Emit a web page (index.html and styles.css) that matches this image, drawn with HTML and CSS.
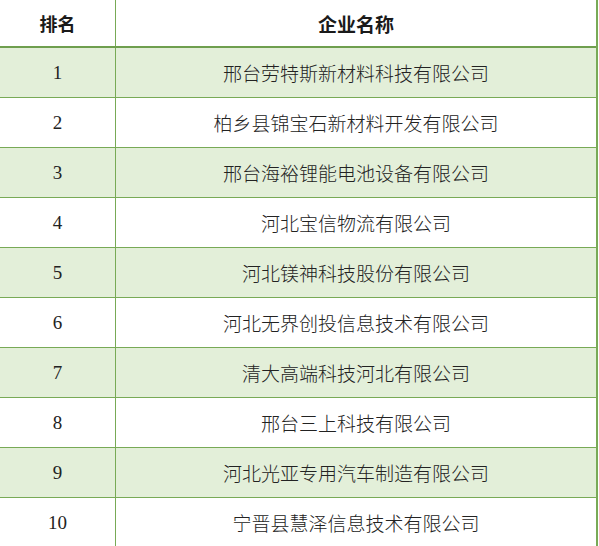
FILE: index.html
```html
<!DOCTYPE html>
<html lang="zh">
<head>
<meta charset="utf-8">
<link rel="stylesheet" href="styles.css">
</head>
<body>
<div class="table">
  <div class="row head">
    <div class="rank">排名</div>
    <div class="name">企业名称</div>
  </div>
  <div class="row alt"><div class="rank">1</div><div class="name">邢台劳特斯新材料科技有限公司</div></div>
  <div class="row"><div class="rank">2</div><div class="name">柏乡县锦宝石新材料开发有限公司</div></div>
  <div class="row alt"><div class="rank">3</div><div class="name">邢台海裕锂能电池设备有限公司</div></div>
  <div class="row"><div class="rank">4</div><div class="name">河北宝信物流有限公司</div></div>
  <div class="row alt"><div class="rank">5</div><div class="name">河北镁神科技股份有限公司</div></div>
  <div class="row"><div class="rank">6</div><div class="name">河北无界创投信息技术有限公司</div></div>
  <div class="row alt"><div class="rank">7</div><div class="name">清大高端科技河北有限公司</div></div>
  <div class="row"><div class="rank">8</div><div class="name">邢台三上科技有限公司</div></div>
  <div class="row alt"><div class="rank">9</div><div class="name">河北光亚专用汽车制造有限公司</div></div>
  <div class="row"><div class="rank">10</div><div class="name">宁晋县慧泽信息技术有限公司</div></div>
</div>
</body>
</html>
```
FILE: styles.css
```css
html, body {
  margin: 0;
  padding: 0;
  background: #ffffff;
}
.table {
  width: 596px;
  border-right: 2px solid #78aa56;
  font-family: "Liberation Serif", "Noto Sans CJK SC", serif;
  color: #222222;
}
.row {
  display: flex;
  height: 49px;
  border-bottom: 1px solid #78aa56;
  font-size: 19px;
}
.row.alt {
  background: #e3efd9;
}
.row.head {
  height: 46px;
  border-bottom: 2px solid #6f9f4e;
  font-family: "Noto Sans CJK SC", sans-serif;
  font-weight: 700;
  font-size: 18px;
  color: #1a1a1a;
}
.rank {
  width: 115px;
  flex: none;
  border-right: 1px solid #78aa56;
  display: flex;
  align-items: center;
  justify-content: center;
}
.name {
  flex: 1;
  display: flex;
  align-items: center;
  justify-content: center;
}
.row:not(.head) .name {
  font-family: "Noto Sans CJK SC", sans-serif;
  font-weight: 300;
}
.head .name {
  font-size: 19px;
}
```
